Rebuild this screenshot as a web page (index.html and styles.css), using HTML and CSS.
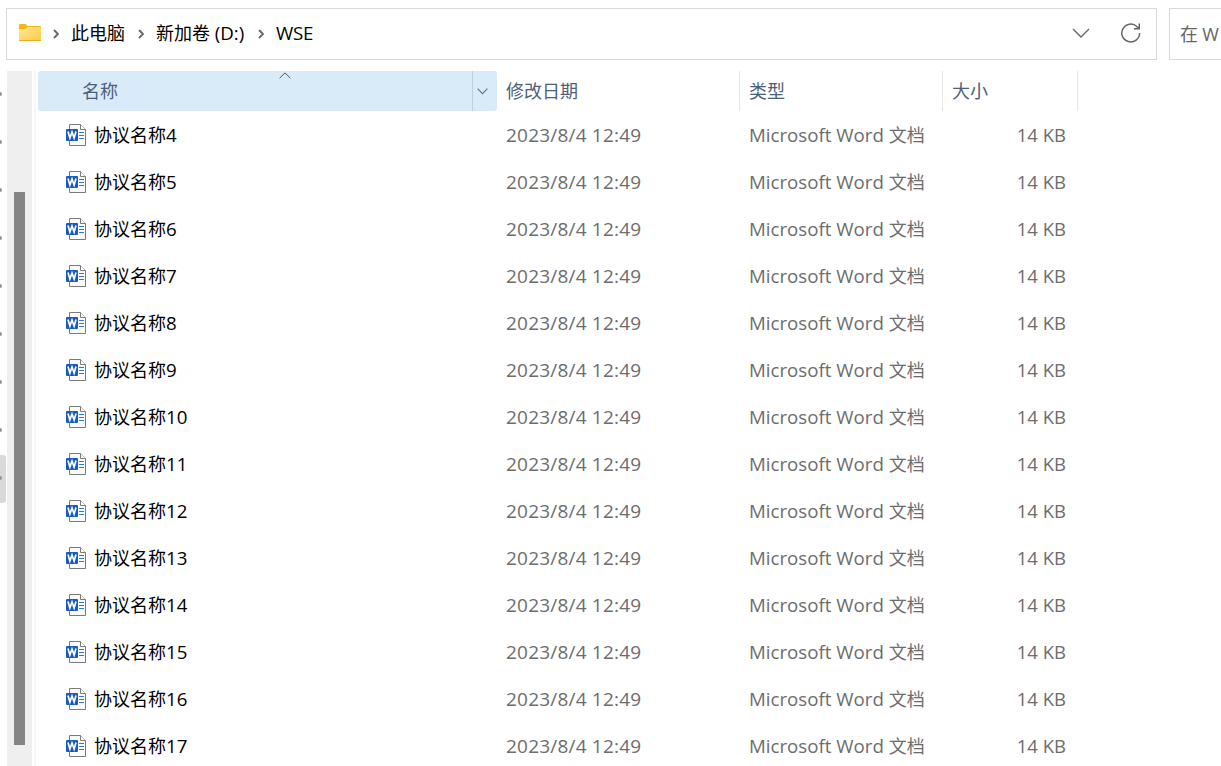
FILE: index.html
```html
<!DOCTYPE html>
<html lang="zh-CN">
<head>
  <meta charset="UTF-8" />
  <meta name="viewport" content="width=device-width, initial-scale=1.0" />
  <title>WSE</title>
  <link rel="stylesheet" href="styles.css">
</head>
<body>
  <svg class="defs" width="0" height="0">
    <symbol id="word" viewBox="0 0 21 22">
      <path d="M3.5 .5h11l5 5v16h-16z" fill="#fafafa" stroke="#7b7b7b"/>
      <path d="M14.5 .5v5h5" fill="#fff" stroke="#7b7b7b"/>
      <path d="M13 8.500h5M13 11.500h5M13 14.500h5" stroke="#2b7cd3"/>
      <rect x="0" y="5" width="12" height="12" rx="1" fill="#185abd"/>
      <path d="M2 7.500l1.900 6.500L6 8l2.100 6L10 7.500" fill="none" stroke="#fff" stroke-width="1.700"/>
    </symbol>
    <symbol id="crumb" viewBox="0 0 6 10">
      <path d="M1 1l4 4-4 4" fill="none" stroke="#666" stroke-width="1.900"/>
    </symbol>
  </svg>

  <div class="topbar">
    <div class="address">
      <svg class="folder" width="22" height="18" viewBox="0 0 22 18">
        <defs>
          <linearGradient id="fg" x1="0" y1="0" x2="1" y2="1">
            <stop offset="0" stop-color="#ffe69a"/>
            <stop offset="1" stop-color="#ffcb3d"/>
          </linearGradient>
        </defs>
        <path d="M0 1q0-1 1-1h5.500l2 2H21q1 0 1 1v5H0z" fill="#f5b70f"/>
        <path d="M0 5h6.500l2-2H21q1 0 1 1v12q0 1-1 1H1q-1 0-1-1z" fill="url(#fg)"/>
        <path d="M0 16.500h22" stroke="#e9ae2a"/>
      </svg>
      <svg class="sep s1" width="6" height="10"><use href="#crumb"/></svg>
      <span class="crumb c1">此电脑</span>
      <svg class="sep s2" width="6" height="10"><use href="#crumb"/></svg>
      <span class="crumb c2">新加卷 <span class="latin">(D:)</span></span>
      <svg class="sep s3" width="6" height="10"><use href="#crumb"/></svg>
      <span class="crumb c3 latin">WSE</span>
      <div class="actions">
        <svg width="18" height="10" viewBox="0 0 18 10">
          <path d="M1 1l8 8 8-8" fill="none" stroke="#666" stroke-width="1.400"/>
        </svg>
        <svg width="20" height="20" viewBox="0 0 20 20">
          <path d="M18.600 10a8.900 8.900 0 1 1-2.600-6.300L18 5.500M18.300 .5v5.300H13" fill="none" stroke="#666" stroke-width="1.500"/>
        </svg>
      </div>
    </div>
    <div class="search">在 W</div>
  </div>

  <div class="main">
    <div class="nav" id="nav"></div>
    <div class="scroll"><div class="thumb"></div></div>
    <div class="divider"></div>
    <div class="files">
      <div class="head">
        <div class="col name">
          名称
          <svg class="sort" width="12" height="7" viewBox="0 0 12 7">
            <path d="M.6 6.200L6 .9l5.400 5.300" fill="none" stroke="#555"/>
          </svg>
          <div class="drop">
            <svg width="11" height="7" viewBox="0 0 11 7">
              <path d="M.6 .7l4.900 5 4.900-5" fill="none" stroke="#66737d" stroke-width="1.100"/>
            </svg>
          </div>
        </div>
        <div class="col date">修改日期</div>
        <div class="col type">类型</div>
        <div class="col size">大小</div>
      </div>
      <div id="rows"></div>
    </div>
  </div>

  <script>
    const rows = document.getElementById('rows');
    for (let i = 4; i <= 17; i++) {
      rows.innerHTML += `
        <div class="row">
          <div class="name"><svg width="21" height="22"><use href="#word"/></svg><span>协议名称<span class="latin">${i}</span></span></div>
          <div class="date">2023/8/4 12:49</div>
          <div class="type"><span class="latin">Microsoft Word </span>文档</div>
          <div class="size">14 KB</div>
        </div>`;
    }

    // tree items, the ninth one is selected
    const nav = document.getElementById('nav');
    for (let i = 0; i < 9; i++) {
      nav.innerHTML += `<div class="node${i === 8 ? ' selected' : ''}"><i></i></div>`;
    }
  </script>
</body>
</html>
```
FILE: styles.css
```css
* {
  box-sizing: border-box;
}

body {
  margin: 0;
  height: 766px;
  overflow: hidden;
  background: #fff;
  font-family: "Open Sans", "Noto Sans CJK SC", sans-serif;
  font-size: 18px;
  line-height: 24px;
  color: #000;
  white-space: nowrap;
}

svg {
  display: block;
  flex: none;
}

.defs {
  position: absolute;
}

/* latin text is a bit larger than the chinese next to it */
.latin {
  font-size: 18.7px;
}

.topbar {
  display: flex;
  gap: 12px;
  height: 71px;
  padding: 8px 0 11px 6px;
}

.address {
  display: flex;
  align-items: center;
  flex: none;
  width: 1151px;
  height: 52px;
  padding: 0 15px 2px 12px;
  border: 1px solid #d9d9d9;
}

.s1 { margin: 2px 12px 0 12px; }
.s2 { margin: 2px 12px 0 13px; }
.s3 { margin: 2px 12px 0 13px; }

.c1 { width: 54px; }
.c2 { width: 89px; }
.c3 { letter-spacing: -0.3px; }

.actions {
  display: flex;
  align-items: center;
  gap: 31px;
  margin-left: auto;
}

.search {
  flex: 1;
  min-width: 0;
  height: 52px;
  padding: 13px 0 13px 10px;
  border: 1px solid #d9d9d9;
  border-right: 0;
  letter-spacing: -0.2px;
  color: #666;
}

.main {
  display: flex;
  height: 695px;
}

.nav {
  flex: none;
  width: 7px;
}

.node {
  display: flex;
  align-items: center;
  width: 6px;
  height: 48px;
  padding-bottom: 3px;
}

.node i {
  width: 2px;
  height: 4px;
  border-radius: 0 2px 2px 0;
  background: #8c989e;
}

.node.selected {
  border-radius: 0 3px 3px 0;
  background: #d9d9d9;
}

.scroll {
  flex: none;
  width: 25px;
  padding: 121px 7px 0;
  background: #efefef;
}

.thumb {
  height: 553px;
  background: #858585;
}

.divider {
  flex: none;
  width: 2px;
  margin: 0 2px;
  background: #f7f7f7;
}

.files {
  width: 1040px;
}

.head,
.row {
  display: grid;
  grid-template-columns: 459px 243px 203px 135px;
}

.head {
  height: 40px;
  line-height: 40px;
  color: #4c607a;
}

.col {
  padding-left: 9px;
  border-right: 1px solid #e5e5e5;
}

.col.name {
  position: relative;
  padding-left: 44px;
  border-right: 0;
  border-radius: 3px;
  background: #d9ebf9;
}

.sort {
  position: absolute;
  left: 241px;
  top: 1px;
}

.drop {
  position: absolute;
  right: 0;
  top: 0;
  display: flex;
  align-items: center;
  width: 25px;
  height: 40px;
  padding-left: 4px;
  border-left: 1px solid #bdd0df;
}

.row {
  height: 47px;
  align-items: center;
  color: #6d6d6d;
}

.row .name {
  display: flex;
  align-items: center;
  gap: 7px;
  padding-left: 28px;
  color: #000;
}

.row .date,
.row .type {
  padding-left: 9px;
}

.row .date {
  font-size: 19px;
  letter-spacing: 0.2px;
}

.row .size {
  padding-right: 12px;
  font-size: 18.5px;
  text-align: right;
}
```
